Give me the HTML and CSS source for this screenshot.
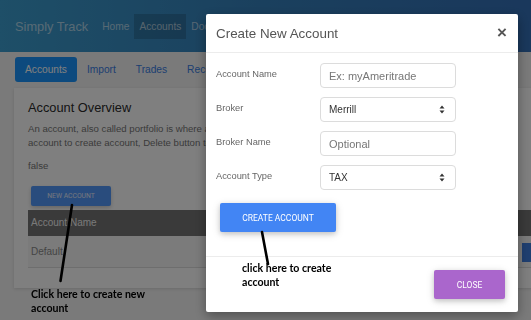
FILE: index.html
```html
<!DOCTYPE html>
<html>
<head>
<meta charset="utf-8">
<link rel="stylesheet" href="styles.css">
</head>
<body>
<nav class="navbar">
  <span class="brand">Simply Track</span>
  <ul class="nav-links">
    <li>Home</li>
    <li class="active">Accounts</li>
    <li>Documentation</li>
  </ul>
</nav>
<ul class="tabs">
  <li class="tab active">Accounts</li>
  <li class="tab">Import</li>
  <li class="tab">Trades</li>
  <li class="tab">Reconcile</li>
</ul>
<section class="card">
  <h2 class="card-title">Account Overview</h2>
  <p class="card-text">An account, also called portfolio is where all your trades are kept. Click New Account button to create several<br>account to create account, Delete button to delete an account.</p>
  <p class="flag">false</p>
  <button class="btn-new">New Account</button>
  <div class="table">
    <div class="thead"><span>Account Name</span><span></span></div>
    <div class="trow"><span>Default</span><span><button class="btn-row" aria-label="Delete"></button></span></div>
  </div>
</section>

<div class="backdrop"></div>

<div class="modal">
  <div class="modal-header">
    <h3 class="modal-title">Create New Account</h3>
    <span class="close">&times;</span>
  </div>
  <div class="modal-body">
    <div class="form-grid">
      <label>Account Name</label>
      <div class="field"><span class="placeholder">Ex: myAmeritrade</span></div>
      <label>Broker</label>
      <div class="field select"><span>Merrill</span><svg width="6" height="9" viewBox="0 0 6 9"><path d="M3 0.5L5.5 3.5H0.5Z M3 8.5L5.5 5.5H0.5Z" fill="#333"/></svg></div>
      <label>Broker Name</label>
      <div class="field"><span class="placeholder">Optional</span></div>
      <label>Account Type</label>
      <div class="field select"><span>TAX</span><svg width="6" height="9" viewBox="0 0 6 9"><path d="M3 0.5L5.5 3.5H0.5Z M3 8.5L5.5 5.5H0.5Z" fill="#333"/></svg></div>
    </div>
    <button class="btn-create">Create Account</button>
  </div>
  <div class="modal-footer">
    <button class="btn-close">Close</button>
  </div>
</div>

<svg class="annot-lines" width="531" height="320" viewBox="0 0 531 320">
  <path d="M72 205 L60.5 281" stroke="#000" stroke-width="2.6" stroke-linecap="round"/>
  <path d="M262 232 L268 264" stroke="#000" stroke-width="2.6" stroke-linecap="round"/>
</svg>
<p class="annot annot-1">Click here to create new<br>account</p>
<p class="annot annot-2">click here to create<br>account</p>
</body>
</html>
```

FILE: styles.css
```css
* { box-sizing: border-box; }
html, body { margin: 0; padding: 0; }
body {
  width: 531px;
  height: 320px;
  overflow: hidden;
  background: #f4f4f4;
  font-family: "Liberation Sans", Arial, sans-serif;
  position: relative;
}
.navbar {
  height: 52px;
  display: flex;
  align-items: center;
  padding-left: 15px;
  background: linear-gradient(90deg, #3c9ed0 0%, #3580bc 50%, #3470b8 100%);
}
.brand {
  font-size: 12.8px;
  color: rgba(255,255,255,0.6);
  margin-right: 9px;
}
.nav-links {
  display: flex;
  list-style: none;
  margin: 0;
  padding: 0;
}
.nav-links li {
  font-size: 10.2px;
  color: rgba(255,255,255,0.6);
  height: 25px;
  line-height: 25px;
  padding: 0 5px;
}
.nav-links li.active {
  background: rgba(0,0,0,0.16);
}
.tabs {
  display: flex;
  list-style: none;
  margin: 5px 0 0;
  padding: 0 0 0 15px;
}
.tab {
  height: 25px;
  line-height: 25px;
  padding: 0 10px;
  font-size: 10.2px;
  color: #3a7ee4;
  white-space: nowrap;
}
.tab.active {
  background: #1a94fc;
  color: #fff;
  border-radius: 3px;
}
.card {
  margin: 6px 0 0 14px;
  width: 600px;
  background: #fff;
  padding: 11px 14px 20px;
  box-shadow: 0 1px 3px rgba(0,0,0,0.12);
}
.card-title {
  font-size: 12.8px;
  font-weight: normal;
  color: #2a2a2a;
  margin: 0;
  line-height: 18px;
}
.card-text {
  margin: 5px 0 0;
  font-size: 9.6px;
  line-height: 14px;
  color: #767676;
  white-space: nowrap;
}
.flag {
  margin: 9px 0 0;
  font-size: 9.6px;
  line-height: 14px;
  color: #767676;
}
.btn-new {
  display: block;
  margin: 13px 0 0 3px;
  width: 80px;
  height: 20px;
  border: 0;
  border-radius: 2px;
  background: #5298fa;
  color: #e8eefc;
  font-family: Roboto, sans-serif;
  font-size: 6.8px;
  text-transform: uppercase;
  padding: 0;
  box-shadow: 0 2px 4px rgba(0,0,0,0.2);
}
.table {
  margin-top: 4px;
  width: 560px;
}
.thead, .trow {
  display: grid;
  grid-template-columns: 491px 1fr;
  padding-left: 3px;
}
.thead {
  height: 26px;
  line-height: 26px;
  background: #747474;
  color: #f2f2f2;
  font-size: 10px;
}
.trow {
  height: 32px;
  background: #f6f6f6;
  border-bottom: 1px solid #dcdcdc;
  font-size: 10px;
  color: #8a8a8a;
  align-items: start;
}
.trow > span:first-child { line-height: 32px; }
.btn-row {
  display: block;
  margin-top: 7px;
  height: 19px;
  width: 60px;
  border: 0;
  background: #3f7ee0;
}
.backdrop {
  position: fixed;
  inset: 0;
  background: rgba(0,0,0,0.5);
}
.modal {
  position: fixed;
  left: 206px;
  top: 14px;
  width: 312px;
  height: 298px;
  background: #fff;
  border-radius: 2px;
  box-shadow: 0 4px 12px rgba(0,0,0,0.35);
  display: flex;
  flex-direction: column;
}
.modal-header {
  height: 39px;
  flex: none;
  display: flex;
  align-items: center;
  justify-content: space-between;
  padding: 0 11px 0 10px;
  border-bottom: 1px solid #ececec;
}
.modal-title {
  margin: 0;
  font-size: 13.4px;
  font-weight: normal;
  color: #555;
}
.close {
  font-size: 17px;
  font-weight: bold;
  color: #555;
  line-height: 1;
  margin-top: -2px;
}
.modal-body {
  padding: 10px 10px 24px;
  border-bottom: 1px solid #ececec;
}
.form-grid {
  display: grid;
  grid-template-columns: 104px 136px;
  row-gap: 9px;
  align-items: center;
}
.form-grid label {
  font-size: 9.3px;
  color: #666;
  margin-top: -3px;
}
.field {
  height: 25px;
  border: 1px solid #dcdcdc;
  border-radius: 4px;
  padding: 0 10px 0 8px;
  display: flex;
  align-items: center;
  justify-content: space-between;
  font-size: 10px;
  color: #333;
}
.placeholder {
  font-size: 11px;
  color: #777;
}
.btn-create {
  display: block;
  margin: 13px 0 0 4px;
  width: 116px;
  height: 29px;
  border: 0;
  border-radius: 2px;
  background: #4285f4;
  color: #fff;
  font-family: Roboto, sans-serif;
  font-size: 8.5px;
  text-transform: uppercase;
  padding: 0;
  box-shadow: 0 2px 5px rgba(0,0,0,0.16), 0 2px 10px rgba(0,0,0,0.12);
}
.modal-footer {
  flex: 1;
  display: flex;
  justify-content: flex-end;
  align-items: flex-start;
  padding: 13px 13px 0 0;
}
.btn-close {
  width: 71px;
  height: 29px;
  border: 0;
  border-radius: 2px;
  background: #aa66cc;
  color: #fff;
  font-family: Roboto, sans-serif;
  font-size: 8.5px;
  text-transform: uppercase;
  padding: 0;
  box-shadow: 0 2px 5px rgba(0,0,0,0.16), 0 2px 10px rgba(0,0,0,0.12);
}
.annot-lines {
  position: absolute;
  left: 0;
  top: 0;
}
.annot {
  position: absolute;
  margin: 0;
  font-family: Lato, "Open Sans", sans-serif;
  font-weight: bold;
  font-size: 10.6px;
  line-height: 13.5px;
  color: #000;
}
.annot-1 { left: 31px; top: 288px; }
.annot-2 { left: 242px; top: 262px; }
```
